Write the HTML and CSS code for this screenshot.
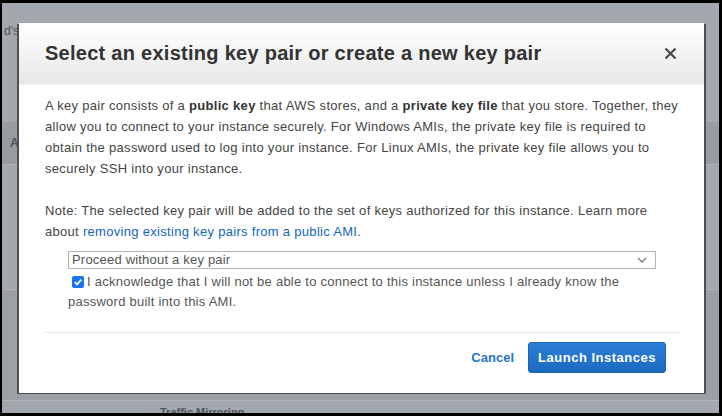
FILE: index.html
```html
<!DOCTYPE html>
<html>
<head>
<meta charset="UTF-8">
<title>Select key pair</title>
<link rel="stylesheet" href="styles.css">
</head>
<body>
<div class="screen">
	<!-- page behind the dialog -->
	<div class="page">
		<div class="pg-top">d's</div>
		<div class="pg-row">Av</div>
		<div class="pg-gap"></div>
		<div class="pg-low"></div>
		<div class="pg-foot">Traffic Mirroring</div>
	</div>

	<div class="modal">
		<div class="modal-head">
			<h1>Select an existing key pair or create a new key pair</h1>
			<svg class="close" width="13" height="13" viewBox="0 0 13 13"><path d="M1.5 1.5l10 10M11.5 1.5l-10 10" stroke="#4a4a4a" stroke-width="2.2"/></svg>
		</div>
		<div class="modal-body">
			<p>A key pair consists of a <b>public key</b> that AWS stores, and a <b>private key file</b> that you store. Together, they allow you to connect to your instance securely. For Windows AMIs, the private key file is required to obtain the password used to log into your instance. For Linux AMIs, the private key file allows you to securely SSH into your instance.</p>
			<p>Note: The selected key pair will be added to the set of keys authorized for this instance. Learn more about <a href="#">removing existing key pairs from a public AMI</a>.</p>
			<div class="choice">
				<div class="select">
					<span>Proceed without a key pair</span>
					<svg width="10" height="6" viewBox="0 0 10 6"><path d="M1 1l4 4 4-4" fill="none" stroke="#777" stroke-width="1.3"/></svg>
				</div>
				<label class="ack"><span class="check"><svg width="10" height="10" viewBox="0 0 10 10"><path d="M1.8 5.2l2.2 2.2 4.3-4.8" fill="none" stroke="#fff" stroke-width="1.7"/></svg></span>I acknowledge that I will not be able to connect to this instance unless I already know the password built into this AMI.</label>
			</div>
		</div>
		<div class="modal-foot">
			<a href="#" class="cancel">Cancel</a>
			<button class="launch">Launch Instances</button>
		</div>
	</div>
</div>
</body>
</html>
```

FILE: styles.css
```css
body{
	margin: 0;
	background: #000;
	font-family: "Liberation Sans", Arial, sans-serif;
}
.screen{
	position: relative;
	width: 717px;
	height: 410px;
	margin: 3px 3px 3px 2px;
	background: #a3a8ae;
	overflow: hidden;
}

/* page behind */
.page{
	display: flex;
	flex-direction: column;
	color: #50555b;
	font-size: 12px;
}
.pg-top{
	height: 20px;
	margin-top: 21px;
	padding-left: 2px;
}
.pg-row{
	margin-top: 78px;
	height: 42px;
	line-height: 42px;
	background: #979ca2;
	padding-left: 8px;
	font-weight: bold;
	border-bottom: 1px solid #b0b5ba;
}
.pg-gap{
	height: 124px;
}
.pg-low{
	height: 110px;
	background: #9ba0a6;
	border-top: 1px solid #aeb3b8;
}
.pg-foot{
	padding-left: 158px;
	font-size: 11px;
	font-weight: bold;
	line-height: 12px;
	border-top: 1px solid #b4b9be;
	padding-top: 5px;
}

/* dialog */
.modal{
	position: absolute;
	left: 17px;
	top: 20px;
	width: 685px;
	height: 370px;
	background: #fff;
	box-shadow: -2px 1px 0 #4b5056, 2px 1px 0 #4b5056;
	display: flex;
	flex-direction: column;
}
.modal-head{
	height: 61px;
	display: flex;
	align-items: center;
	justify-content: space-between;
	padding: 0 27px 0 26px;
	background: linear-gradient(#ffffff, #e7e7e7);
	border-bottom: 1px solid #f2f2f2;
}
.modal-head h1{
	margin: 0;
	font-size: 20px;
	font-weight: bold;
	color: #333;
	letter-spacing: 0.27px;
}
.modal-body{
	padding: 10px 22px 0 26px;
	color: #444;
	font-size: 13px;
	line-height: 21px;
	letter-spacing: 0.3px;
}
.modal-body p{
	margin: 0 0 21px 0;
}
.modal-body b{
	color: #333;
}
.modal-body a{
	color: #1166bb;
	text-decoration: none;
}
.choice{
	margin: -12px 0 0 23px;
	width: 588px;
}
.select{
	height: 16px;
	border: 1px solid #b5b5b5;
	display: flex;
	align-items: center;
	justify-content: space-between;
	padding: 0 8px 0 3px;
	font-size: 13px;
	letter-spacing: 0.2px;
	color: #555;
	line-height: 16px;
}
.ack{
	display: block;
	line-height: 20px;
	font-size: 13px;
	letter-spacing: 0.25px;
	color: #555;
	margin-top: 3px;
	padding-right: 20px;
}
.check{
	display: inline-block;
	width: 12px;
	height: 12px;
	border-radius: 2px;
	background: #1a73e8;
	vertical-align: -2px;
	margin: 0 3px 0 4px;
	line-height: 0;
}
.check svg{
	margin: 1px;
}
.modal-foot{
	margin: 20px 24px 0 26px;
	border-top: 1px solid #e4e4e4;
	padding-top: 9px;
	display: flex;
	justify-content: flex-end;
	align-items: center;
	gap: 14px;
}
.cancel{
	color: #2574c8;
	font-weight: bold;
	font-size: 13px;
	text-decoration: none;
}
.launch{
	width: 138px;
	height: 31px;
	border: 1px solid #1d64b0;
	border-radius: 3px;
	background: linear-gradient(#2b7fd6, #1c6abf);
	color: #fff;
	font-family: "Liberation Sans", Arial, sans-serif;
	font-weight: bold;
	font-size: 13px;
	letter-spacing: 0.5px;
	margin-right: 14px;
}
```
